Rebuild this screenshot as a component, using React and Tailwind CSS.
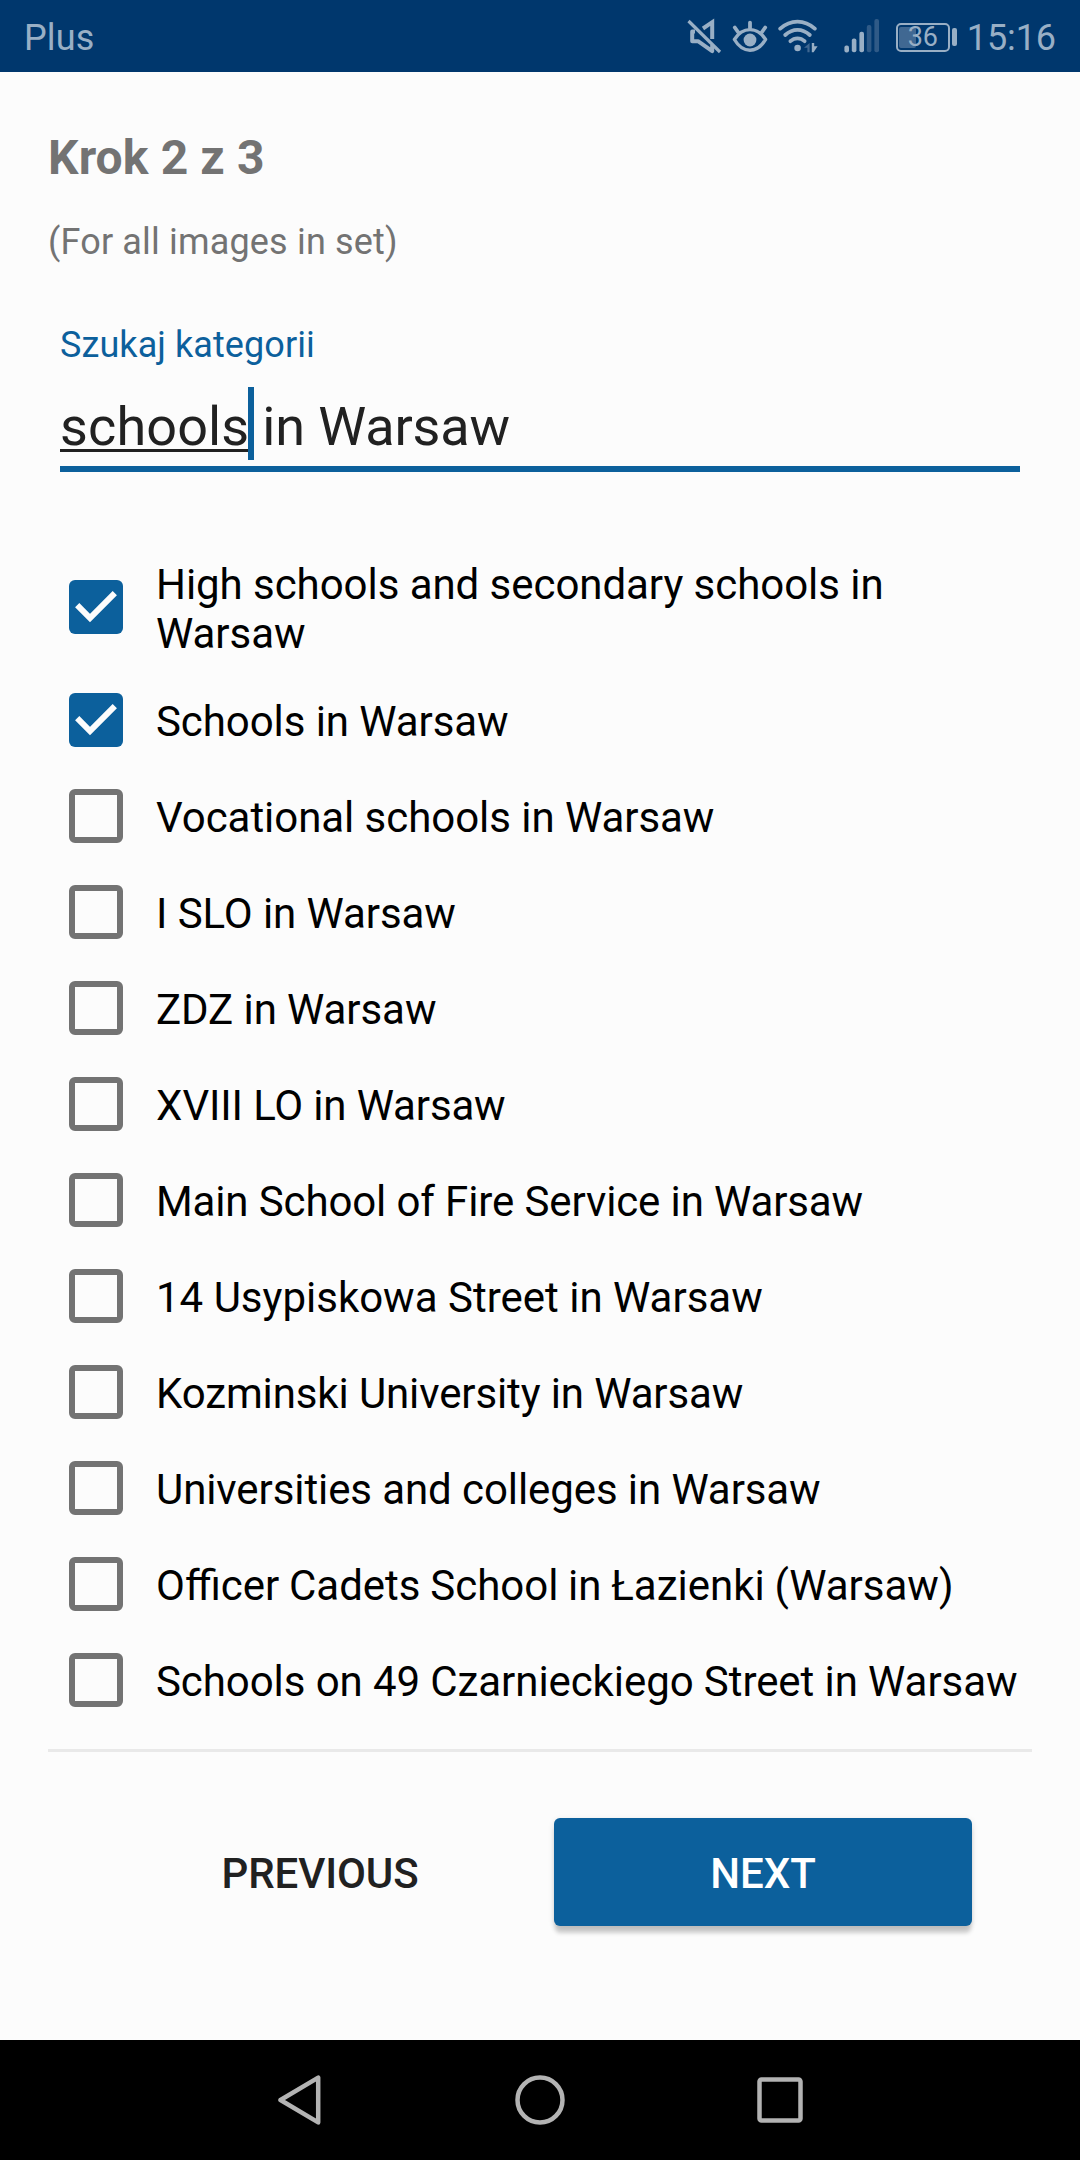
const categories = [
  { name: 'High schools and secondary schools in Warsaw', checked: true, spacing: 'tracking-[-0.05px]' },
  { name: 'Schools in Warsaw', checked: true, spacing: 'tracking-[-0.08px]' },
  { name: 'Vocational schools in Warsaw', spacing: 'tracking-[-0.05px]' },
  { name: 'I SLO in Warsaw', spacing: 'tracking-[-0.08px]' },
  { name: 'ZDZ in Warsaw', spacing: 'tracking-[-0.08px]' },
  { name: 'XVIII LO in Warsaw', spacing: 'tracking-[-0.15px]' },
  { name: 'Main School of Fire Service in Warsaw', spacing: 'tracking-[-0.12px]' },
  { name: '14 Usypiskowa Street in Warsaw', spacing: 'tracking-normal' },
  { name: 'Kozminski University in Warsaw', spacing: 'tracking-[-0.12px]' },
  { name: 'Universities and colleges in Warsaw', spacing: 'tracking-[-0.09px]' },
  { name: 'Officer Cadets School in Łazienki (Warsaw)', spacing: 'tracking-normal [word-spacing:-0.7px]' },
  { name: 'Schools on 49 Czarnieckiego Street in Warsaw', spacing: 'tracking-[-0.08px]' },
];

function MuteIcon() {
  return (
    <svg className="h-[36px] w-[36px]" viewBox="0 0 36 36" fill="none" stroke="#99afc5" strokeWidth="3.6">
      <path d="M16 10.5 L25.2 4.2 V21" strokeWidth="4" />
      <path d="M8 13.5 H5.2 V23.2 H11 L25.2 33.2 V27" strokeLinejoin="round" strokeWidth="4" />
      <path d="M1.5 3 L33 34" strokeWidth="3.2" />
    </svg>
  );
}

function EyeIcon() {
  return (
    <svg className="h-[36px] w-[36px]" viewBox="0 0 36 36" fill="none" stroke="#99afc5" strokeWidth="3.8" strokeLinecap="round">
      <path d="M2.4 21.5 C8 12.5 14 11.6 18 11.6 C22 11.6 28 12.5 33.6 21.5 C28 31 22 32.2 18 32.2 C14 32.2 8 31 2.4 21.5 Z" strokeLinejoin="round" strokeWidth="3.4" />
      <circle cx="18" cy="22" r="6.4" fill="#99afc5" stroke="none" />
      <path d="M18 4.6 V10 M2.8 9.5 L6 14 M33.2 9.5 L30 14" />
    </svg>
  );
}

function WifiIcon() {
  return (
    <svg className="h-[36px] w-[42px]" viewBox="0 0 42 36" fill="none" stroke="#99afc5" strokeWidth="3.8" strokeLinecap="round">
      <path d="M2.2 10.6 C12.5 1.2 26.5 1.2 36.8 10.6" />
      <path d="M7.2 17 C14.8 10.2 24.2 10.2 31.8 17" />
      <path d="M12.4 23.2 C16.6 19.4 22.4 19.4 26.6 23.2" />
      <circle cx="19.6" cy="30" r="3.3" fill="#99afc5" stroke="none" />
      <path d="M31.6 25 V34.3 H29.4 V29.8 H26 Z" fill="#406892" stroke="none" />
      <path d="M33.8 25 V34.3 H35.6 L39.6 28.2 H36.2 V25 Z" fill="#99afc5" stroke="none" />
    </svg>
  );
}

function SignalIcon() {
  return (
    <svg className="h-[36px] w-[36px]" viewBox="0 0 36 36" fill="#99afc5">
      <rect x="0.4" y="27.4" width="4.6" height="7" rx="2" />
      <rect x="7.8" y="20.6" width="4.6" height="13.6" rx="2" />
      <rect x="15.4" y="13.8" width="4.6" height="20.4" rx="2" />
      <rect x="22.8" y="7" width="4.6" height="27.2" rx="2" fill="#2f5a87" />
      <rect x="30.4" y="1" width="4.6" height="33.2" rx="2" fill="#2f5a87" />
    </svg>
  );
}

function Battery() {
  return (
    <div className="flex items-center gap-[2px]">
      <div className="relative flex h-[29px] w-[54px] items-center justify-center rounded-[5px] border-2 border-[#99afc5]">
        <div className="absolute left-[1px] top-[2px] h-[21px] w-[17px] rounded-[2px] bg-[#406892]" />
        <span className="relative text-[27px] leading-[25px] text-[#99afc5]">36</span>
      </div>
      <div className="h-[18px] w-[5px] rounded-[2px] bg-[#99afc5]" />
    </div>
  );
}

function StatusBar() {
  return (
    <header className="flex h-[72px] items-center bg-[#00376d] text-[36px] leading-[42px] text-[#99afc5]">
      <span className="ml-6 pt-1 tracking-[0.15px]">Plus</span>
      <div className="ml-auto mr-6 flex items-center">
        <MuteIcon />
        <div className="ml-[9px]"><EyeIcon /></div>
        <div className="ml-[10px]"><WifiIcon /></div>
        <div className="ml-[24px]"><SignalIcon /></div>
        <div className="ml-[16px] pt-[2px]"><Battery /></div>
        <span className="ml-[10px] pt-1 tracking-[-0.1px]">15:16</span>
      </div>
    </header>
  );
}

function Checkbox({ checked }) {
  if (!checked) {
    return <span className="size-[54px] shrink-0 rounded-[6px] border-[6px] border-[#737373]" />;
  }
  return (
    <span className="size-[54px] shrink-0 rounded-[6px] bg-[#0c609c]">
      <svg className="size-[54px]" viewBox="0 0 54 54" fill="none" stroke="#fcfcfc" strokeWidth="6">
        <path d="M8.2 25.2 L21 38 L45.8 13.2" />
      </svg>
    </span>
  );
}

export default function App() {
  return (
    <div className="flex h-[2160px] w-[1080px] flex-col bg-[#fcfcfc] font-['Roboto',sans-serif]">
      <StatusBar />
      <main className="flex flex-1 flex-col px-12 pt-[58px]">
        <h1 className="text-[48px] font-bold leading-[56px] tracking-[0.12px] text-[#737373]">Krok 2 z 3</h1>
        <p className="mt-[35px] text-[36px] leading-[42px] tracking-[0.17px] text-[#737373]">(For all images in set)</p>

        <div className="mx-3 mt-[61px] flex h-[148px] flex-col border-b-[6px] border-[#0c609c]">
          <label className="text-[36px] leading-[42px] tracking-[0.08px] text-[#0c609c]">Szukaj kategorii</label>
          <div className="mt-[21px] flex h-[73px] text-[54px] text-[#212121]">
            <span className="mt-[8px] h-[57px] w-[189px] border-b-[3px] border-[#212121] leading-[64px] tracking-[0.12px]">schools</span>
            <span className="-ml-px -mr-[5px] h-[73px] w-[6px] shrink-0 bg-[#0c609c]" />
            <span className="mt-[8px] whitespace-pre leading-[64px] tracking-[-0.12px]"> in Warsaw</span>
          </div>
        </div>

        <ul className="mt-[70px] flex flex-col">
          {categories.map(({ name, checked, spacing }) => (
            <li key={name} className="flex min-h-24 items-center gap-[33px] py-4 pl-[21px]">
              <Checkbox checked={checked} />
              <span className={`-mb-[1.5px] mt-[1.5px] text-[42px] leading-[49px] text-black ${spacing}`}>{name}</span>
            </li>
          ))}
        </ul>

        <div className="mt-[21px] h-[3px] bg-[#e9e9e9]" />

        <div className="mt-[66px] flex pl-[62px] pr-[60px] text-[42px] font-medium leading-[49px]">
          <button className="h-[108px] w-[420px] pt-[3px] tracking-[-0.1px] text-[#212121]">PREVIOUS</button>
          <button className="ml-auto h-[108px] w-[418px] rounded-[6px] bg-[#0c609c] pt-[3px] text-white shadow-[0_8px_4px_-1px_rgba(0,0,0,0.18),0_2px_6px_rgba(0,0,0,0.12)]">NEXT</button>
        </div>
      </main>

      <nav className="flex h-[120px] items-center justify-center gap-[190px] bg-black">
        <svg className="size-[50px]" viewBox="0 0 50 50" fill="none" stroke="#b3b3b3" strokeWidth="4.5" strokeLinejoin="round">
          <path d="M43.2 2.6 V47.4 L5.5 25 Z" />
        </svg>
        <svg className="size-[50px]" viewBox="0 0 50 50" fill="none" stroke="#b3b3b3" strokeWidth="4.5">
          <circle cx="25" cy="25" r="22.5" />
        </svg>
        <svg className="size-[50px]" viewBox="0 0 50 50" fill="none" stroke="#b3b3b3" strokeWidth="4.5">
          <rect x="4.5" y="4.5" width="41" height="41" rx="2" />
        </svg>
      </nav>
    </div>
  );
}
